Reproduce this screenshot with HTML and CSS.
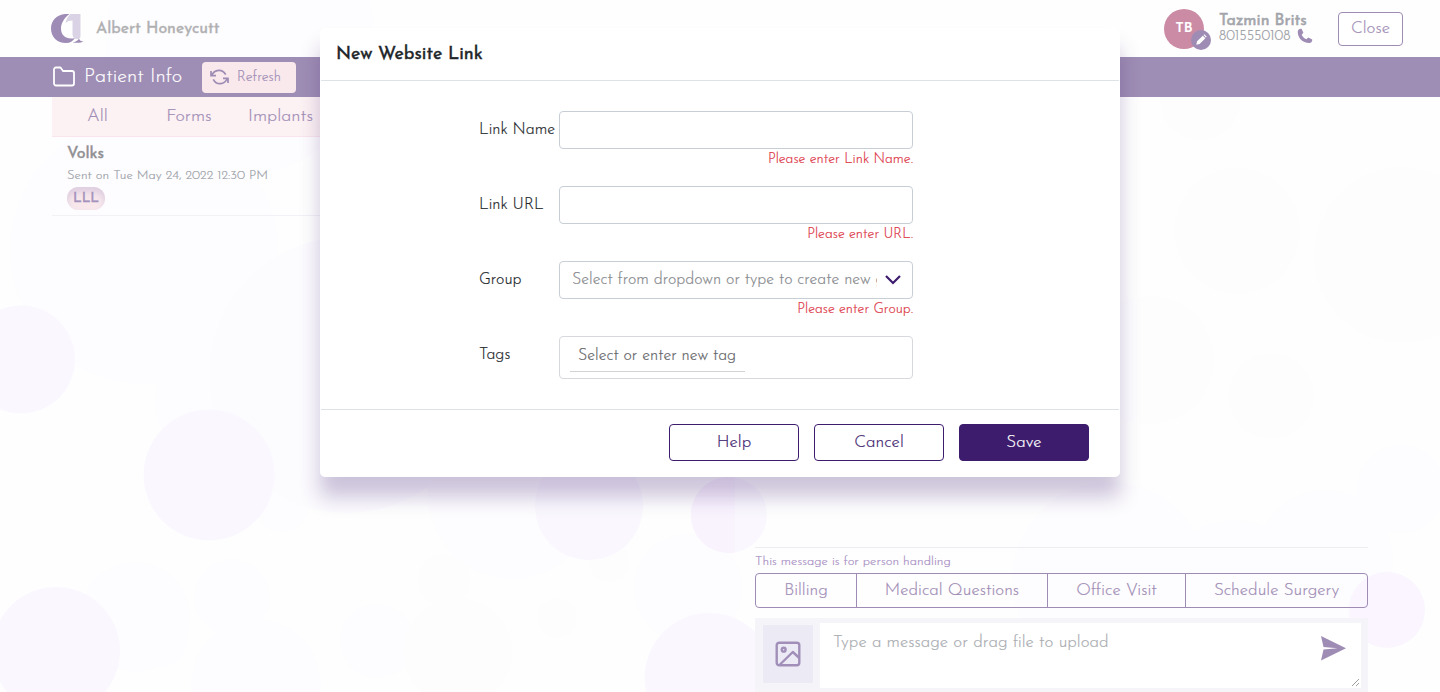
FILE: index.html
```html
<!DOCTYPE html>
<html lang="en">
<head>
<meta charset="utf-8">
<title>Patient Info</title>
<link rel="stylesheet" href="styles.css">
</head>
<body>
<svg class="bubbles" width="1440" height="692" viewBox="0 0 1440 692" aria-hidden="true">
  <g fill="#fdfcfe">
    <circle cx="240" cy="40" r="135"/><circle cx="135" cy="306" r="53"/><circle cx="194" cy="281" r="38"/>
    <circle cx="144" cy="250" r="134"/><circle cx="209" cy="403" r="54"/><circle cx="135" cy="617" r="55"/>
    <circle cx="232" cy="597" r="38"/><circle cx="377" cy="641" r="37"/><circle cx="512" cy="495" r="84"/>
    <circle cx="160" cy="640" r="27"/><circle cx="282" cy="505" r="27"/><circle cx="256" cy="684" r="65"/>
    <circle cx="688" cy="588" r="54"/><circle cx="1110" cy="580" r="98"/><circle cx="1233" cy="595" r="75"/>
    <circle cx="1401" cy="489" r="44"/><circle cx="1325" cy="558" r="68"/>
    <circle cx="347" cy="375" r="138" fill="#fcfbfe"/>
  </g>
  <g fill="#fdfdfe">
    <circle cx="1237" cy="231" r="63"/><circle cx="1402" cy="255" r="88"/><circle cx="1271" cy="396" r="43"/>
    <circle cx="1150" cy="360" r="64"/><circle cx="1200" cy="100" r="40"/><circle cx="458" cy="652" r="54"/>
    <circle cx="444" cy="580" r="26"/><circle cx="557" cy="618" r="20"/><circle cx="609" cy="562" r="20"/>
  </g>
  <g fill="#faf8fe">
    <circle cx="21" cy="359.500" r="54"/><circle cx="209" cy="475" r="65.500"/><circle cx="56" cy="651" r="64"/>
    <circle cx="589" cy="506" r="54"/><circle cx="709.500" cy="678" r="65"/>
    <circle cx="729" cy="515" r="38"/>
  </g>
  <path d="M735 477.500A38 38 0 1 0 735 552.500Z" fill="#f9f3fe"/>
  <circle cx="1387" cy="610" r="38" fill="#faf5fe"/>
</svg>

<header class="topbar">
  <svg class="logo" width="33" height="30" viewBox="0 0 33 30">
    <path d="M18.500 0C8-1 0 5 0 14.500C0 23 6 29 15 29c4 0 7-2 9-5-8 2-14-2-14-9.500 0-5 3-10.500 8.500-14.500Z" fill="#9f8cb6"/>
    <path d="M19.500 0h10v22c0 2-1 3-3 3-3 0-5-2-5-5V6.500c-2.500 0-5 .8-7 2.500 1-4 2.500-7 5-9Z" fill="#d9d3e5"/>
    <path d="M21.500 28.500c3-.5 5.500-2 6.500-4 .5 2 2 3 4.500 3-2 1.500-7 1.500-11 1Z" fill="#9f8cb6"/>
  </svg>
  <span class="patient">Albert Honeycutt</span>
  <div class="avatar">TB
    <span class="edit"><svg width="14" height="14" viewBox="0 0 14 14"><path d="M1.500 12.500l.9-3.900L9.100 1.900l3 3-6.700 6.700ZM9.900 1.200l1-.9 2.800 2.800-1 1Z" fill="#fff"/></svg></span>
  </div>
  <div class="user">
    <div class="user-name">Tazmin Brits</div>
    <div class="user-phone"><span>8015550108</span>
      <svg width="16" height="16" viewBox="0 0 16 16"><path d="M.8 3C1 1.500 3 .4 4.500.8l1.900 3.900-1.700 2c1 2 2.500 3.600 4.600 4.600l2-1.700 3.900 1.900c.4 1.700-1.100 3.500-2.900 3.500C5.500 15 .2 9.500.8 3Z" fill="#9e8cb5"/></svg>
    </div>
  </div>
  <button class="close">Close</button>
</header>

<nav class="titlebar">
  <svg width="24" height="24" viewBox="0 0 24 24" fill="none" stroke="#fff" stroke-width="1.800" stroke-linejoin="round"><path d="M22 18.500a2 2 0 0 1-2 2H4a2 2 0 0 1-2-2v-14a2 2 0 0 1 2-2h4.500l2.500 3.500h9a2 2 0 0 1 2 2Z"/></svg>
  <span class="title">Patient Info</span>
  <button class="refresh">
    <svg width="19" height="18" viewBox="0 0 19 18" fill="none" stroke="#9e8cb5" stroke-width="1.700"><path d="M1 3v4.700h5M18 15v-4.700h-5M1.700 7.500C4.500 1 12.500.5 15.700 6.700M17.300 10.500C14.500 17 6.500 17.500 3.300 11.300"/></svg>
    <span>Refresh</span>
  </button>
</nav>

<main class="content">
  <section class="records">
    <div class="tabs"><span class="tab">All</span><span class="tab">Forms</span><span class="tab">Implants</span></div>
    <article class="record">
      <div class="record-name">Volks</div>
      <div class="record-date">Sent on Tue May 24, 2022 12:30 PM</div>
      <span class="record-tag">LLL</span>
    </article>
  </section>
  <section class="chat">
    <div class="chat-note">This message is for person handling</div>
    <div class="topics">
      <span class="topic">Billing</span><span class="topic">Medical Questions</span><span class="topic">Office Visit</span><span class="topic">Schedule Surgery</span>
    </div>
    <div class="composer">
      <div class="attach"><svg width="26" height="26" viewBox="0 0 26 26" fill="none" stroke="#a18fb9" stroke-width="2.400"><rect x="1.700" y="1.700" width="22.600" height="22.600" rx="2.500"/><circle cx="8.700" cy="8.700" r="1.900"/><path d="M4.500 24L17.800 11l6.500 6" stroke-linejoin="round"/></svg></div>
      <div class="message">
        <span>Type a message or drag file to upload</span>
        <svg class="send" width="25" height="25" viewBox="0 0 25 25"><path d="M0 0l25 12.200L0 24.500l2.500-11 14-1.200-14-1.200Z" fill="#9e8cb5"/></svg>
        <svg class="grip" width="9" height="9" viewBox="0 0 9 9" stroke="#888" stroke-width=".8"><path d="M1 8L8 1M5 8l3-3"/></svg>
      </div>
    </div>
  </section>
</main>

<div class="modal" role="dialog">
  <div class="modal-head">New Website Link</div>
  <form class="modal-body">
    <div class="row"><label>Link Name</label><div class="field"><div class="control"></div><div class="error">Please enter Link Name.</div></div></div>
    <div class="row"><label>Link URL</label><div class="field"><div class="control"></div><div class="error">Please enter URL.</div></div></div>
    <div class="row"><label>Group</label><div class="field"><div class="control select"><span class="hint">Select from dropdown or type to create new group</span><svg width="16" height="10" viewBox="0 0 16 10" fill="none" stroke="#3d1c6e" stroke-width="2.200"><path d="M1 1l7 7 7-7"/></svg></div><div class="error">Please enter Group.</div></div></div>
    <div class="row row-last"><label>Tags</label><div class="field"><div class="control tags"><span class="tag-input">Select or enter new tag</span></div></div></div>
  </form>
  <div class="modal-foot">
    <button type="button" class="btn">Help</button><button type="button" class="btn">Cancel</button><button type="button" class="btn btn-save">Save</button>
  </div>
</div>
</body>
</html>
```

FILE: styles.css
```css
* { box-sizing: border-box; }
body {
  margin: 0;
  height: 692px;
  overflow: hidden;
  position: relative;
  display: flex;
  flex-direction: column;
  background: #fefefe;
  color: #212529;
  font-family: "Josefin Sans", Lato, sans-serif;
  font-weight: 300;
  white-space: nowrap;
  -webkit-text-stroke: .2px;
}
button { font: inherit; padding: 0; display: flex; align-items: center; justify-content: center; }
.bubbles { position: absolute; inset: 0; z-index: -1; }

.topbar { height: 57px; flex: none; display: flex; align-items: center; padding: 0 37px 0 51px; }
.patient { margin-left: 12px; font-size: 16px; font-weight: 400; -webkit-text-stroke: .35px; color: #b0b0b2; }
.avatar { position: relative; margin-left: auto; width: 40px; height: 40px; border-radius: 50%; background: #cb8ba5; color: #fff; font-size: 14px; font-weight: 600; line-height: 40px; text-align: center; }
.edit { position: absolute; right: -7px; bottom: -1px; width: 20px; height: 20px; border-radius: 50%; background: #9e8cb5; display: flex; align-items: center; justify-content: center; }
.edit svg { width: 12px; height: 12px; }
.user { width: 119px; margin-left: 15px; height: 36px; }
.user-name { font-size: 16px; font-weight: 400; -webkit-text-stroke: .5px; line-height: 21px; height: 18px; color: #a3a5ab; }
.user-phone { display: flex; align-items: center; gap: 7px; font-size: 14px; line-height: 16px; color: #9699a0; }
.user-phone span { width: 71px; }
.user-phone svg { margin-top: -1px; }
.close { width: 65px; height: 34px; border: 1px solid #9e8cb5; border-radius: 4px; background: #fff; color: #9e8cb5; font-size: 17px; }

.titlebar { height: 40px; flex: none; display: flex; align-items: center; padding-left: 52px; background: #9e8db4; color: #fff; }
.title { width: 126px; padding-left: 8px; font-size: 20px; }
.refresh { width: 94px; height: 31px; border: 0; border-radius: 4px; background: #f9e8ec; color: #9e8cb5; font-size: 14px; gap: 8px; justify-content: flex-start; padding-left: 8px; }

.content { flex: 1; display: flex; justify-content: space-between; padding: 0 72px 0 52px; }
.records { width: 400px; }
.tabs { height: 40px; display: grid; grid-template-columns: 91px 92px 91px; align-items: center; justify-items: center; background: #fcf1f3; border-bottom: 1px solid #f9e5eb; font-size: 18px; color: #9e8cb5; line-height: 36px; }
.record { height: 79px; padding: 8px 15px 0; border-bottom: 1px solid #f2f1f5; }
.record-name { font-size: 16px; font-weight: 400; -webkit-text-stroke: .4px; line-height: 18px; color: #909093; }
.record-date { margin-top: 5px; font-size: 13px; line-height: 16px; color: #9a9ea6; }
.record-tag { display: block; width: 38px; height: 23px; margin-top: 3px; border-radius: 12px; background: #f8e8ec; box-shadow: inset 0 5px 7px #ddcde0; color: #a692bd; font-size: 14px; font-weight: 400; -webkit-text-stroke: .4px; line-height: 24px; text-align: center; }

.chat { align-self: flex-end; width: 613px; height: 145px; display: flex; flex-direction: column; border-top: 1px solid #ededf1; color: #9e8cb5; }
.chat-note { height: 25px; line-height: 27px; font-size: 13px; color: #a68dc3; }
.topics { height: 35px; display: grid; grid-template-columns: 100px 191px 138px 1fr; border: 1px solid #9e8cb5; border-radius: 4px; font-size: 17px; line-height: 34px; text-align: center; }
.topic + .topic { border-left: 1px solid #9e8cb5; }
.composer { flex: 1; margin-top: 10px; padding: 5px 7px 4px 8px; display: flex; gap: 7px; background: #f5f4f8; }
.attach { width: 50px; height: 58px; margin-top: 2px; background: #ecebf5; display: flex; align-items: center; justify-content: center; }
.message { position: relative; flex: 1; padding: 9px 13px; background: #fff; color: #a9acb1; font-size: 17px; line-height: 22px; }
.send { position: absolute; right: 15px; top: 13px; }
.grip { position: absolute; right: 1px; bottom: 1px; }

.modal { position: absolute; left: 320px; top: 28px; width: 800px; height: 449px; padding: 0 1px; display: flex; flex-direction: column; background: #fff; border-radius: 5px; box-shadow: 0 20px 20px rgba(61, 28, 110, .25); }
.modal-head { height: 53px; flex: none; padding: 0 15px; line-height: 54px; font-size: 18px; font-weight: 400; -webkit-text-stroke: .4px; border-bottom: 1px solid #dee2e6; }
.modal-body { flex: 1; padding: 30px 206px 0 158px; }
.row { display: flex; height: 75px; }
.row-last { height: 43px; }
.row label { width: 80px; line-height: 38px; font-size: 16px; }
.field { width: 354px; }
.control { height: 38px; border: 1px solid #c8ced5; border-radius: 4px; }
.select { display: flex; align-items: center; justify-content: space-between; padding: 0 11px 0 12px; color: #86888c; font-size: 16px; }
.hint { width: 305px; overflow: hidden; line-height: 36px; }
.error { text-align: right; color: #dc3545; font-size: 14px; line-height: 22px; }
.tags { height: 43px; border-color: #d6d8db; padding: 5px 10px; }
.tag-input { display: block; width: 175px; height: 30px; padding-left: 8px; border-bottom: 1px solid #d3d3d6; color: #626467; font-size: 16px; line-height: 29px; }
.modal-foot { height: 68px; flex: none; padding: 14px 30px 0 0; display: flex; justify-content: flex-end; gap: 15px; border-top: 1px solid #dee2e6; }
.btn { width: 130px; height: 37px; border: 1px solid #3d1c6e; border-radius: 4px; background: #fff; color: #3d1c6e; font-size: 17px; }
.btn-save { background: #3d1c6e; color: #fff; }
```
